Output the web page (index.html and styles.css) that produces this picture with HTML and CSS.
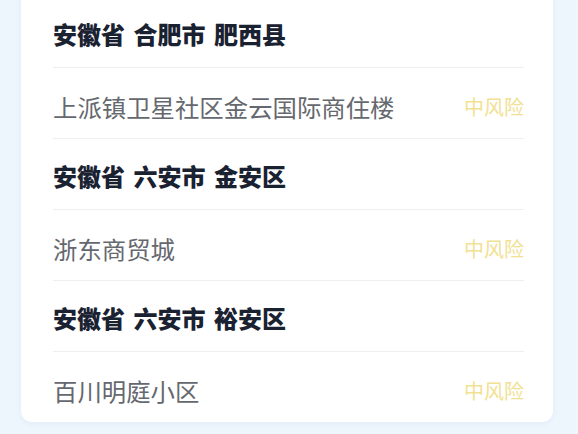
FILE: index.html
```html
<!DOCTYPE html>
<html lang="zh-CN">
<head>
<meta charset="utf-8">
<link rel="stylesheet" href="styles.css">
</head>
<body>
<div class="card">
  <div class="region">安徽省 合肥市 肥西县</div>
  <div class="place"><span class="name">上派镇卫星社区金云国际商住楼</span><span class="risk">中风险</span></div>
  <div class="region">安徽省 六安市 金安区</div>
  <div class="place"><span class="name">浙东商贸城</span><span class="risk">中风险</span></div>
  <div class="region">安徽省 六安市 裕安区</div>
  <div class="place last"><span class="name">百川明庭小区</span><span class="risk">中风险</span></div>
</div>
</body>
</html>
```

FILE: styles.css
```css
html, body {
  margin: 0;
  padding: 0;
  background: #eef6fd;
  height: 434px;
  overflow: hidden;
  font-family: "Noto Sans CJK SC", "Noto Sans", sans-serif;
}
.card {
  margin: -20px 0 0 21px;
  width: 532px;
  background: #ffffff;
  border-radius: 11px;
  padding: 17px 29px 0 32px;
  box-sizing: border-box;
  box-shadow: 0 2px 6px rgba(160, 190, 220, 0.15);
}
.region, .place {
  height: 71px;
  box-sizing: border-box;
  padding-top: 7px;
  border-bottom: 1px solid #efefef;
  display: flex;
  align-items: center;
}
.region {
  padding-top: 3px;
  font-size: 24px;
  font-weight: 900;
  color: #1a2232;
  word-spacing: 3px;
}
.place {
  justify-content: space-between;
}
.place.last {
  border-bottom: none;
  height: 70px;
}
.name {
  font-size: 24.4px;
  color: #65686e;
}
.risk {
  font-size: 20px;
  color: #f1e192;
}
```
